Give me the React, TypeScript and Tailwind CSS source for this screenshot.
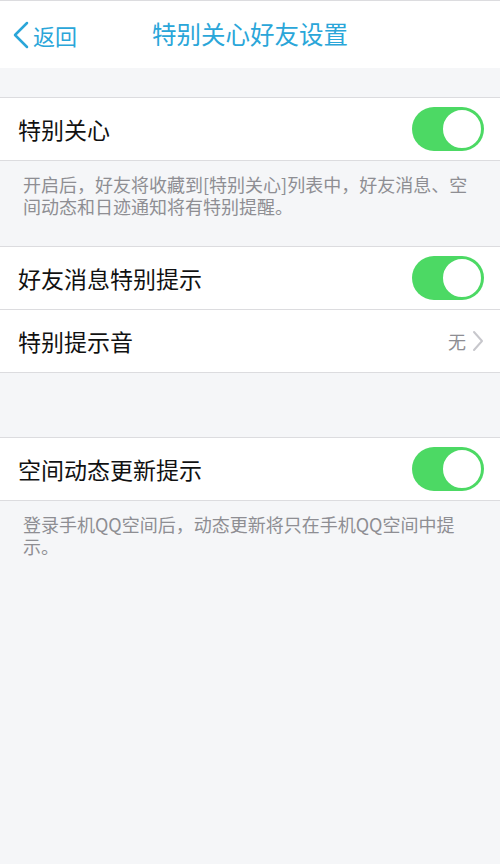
import React from 'react';

const font = { fontFamily: '"Noto Sans CJK SC", "Noto Sans", sans-serif' };

function Toggle() {
  return (
    <div className="relative h-[44px] w-[72px] rounded-full bg-[#4cd964]">
      <div className="absolute right-[1px] top-[1px] h-[42px] w-[42px] rounded-full border-[2px] border-[#4cd964] bg-white" />
    </div>
  );
}

function Row({ label, right, last }: { label: string; right: React.ReactNode; last?: boolean }) {
  return (
    <div className={`flex items-center justify-between bg-white pl-[18px] pr-[16px] ${last ? 'h-[62px]' : 'h-[63px] border-b border-[#dcdcdf]'}`}>
      <span className="text-[23px] leading-none text-[#111]">{label}</span>
      {right}
    </div>
  );
}

export default function App() {
  return (
    <div className="min-h-[864px] w-full bg-[#f5f6f8]" style={font}>
      {/* Nav bar */}
      <div className="relative flex h-[68px] items-center justify-center border-t border-[#dcdcdf] bg-white">
        <div className="absolute left-[10px] top-[19px] flex items-center text-[#2aa6d9]">
          <svg width="22" height="30" viewBox="0 0 22 30" fill="none">
            <path d="M17 3 L5 15 L17 27" stroke="#2aa6d9" strokeWidth="2.5" strokeLinecap="round" strokeLinejoin="round" />
          </svg>
          <span className="ml-[1px] text-[22px] leading-none">返回</span>
        </div>
        <span className="text-[24.5px] leading-none text-[#2aa6d9]">特别关心好友设置</span>
      </div>

      <div className="h-[29px]" />

      {/* Group 1 */}
      <div className="border-y border-[#dcdcdf]">
        <Row label="特别关心" right={<Toggle />} last />
      </div>
      <div className="h-[85px] px-[23px] pt-[12px] text-[18px] leading-[22px] text-[#8e8e93]">
        开启后，好友将收藏到[特别关心]列表中，好友消息、空间动态和日迹通知将有特别提醒。
      </div>

      {/* Group 2 */}
      <div className="border-y border-[#dcdcdf]">
        <Row label="好友消息特别提示" right={<Toggle />} />
        <Row
          label="特别提示音"
          right={
            <div className="flex items-center gap-[6px] text-[18px] text-[#8e8e93]">
              <span>无</span>
              <svg width="12" height="22" viewBox="0 0 12 22" fill="none">
                <path d="M2 2 L10 11 L2 20" stroke="#c7c7cc" strokeWidth="2" strokeLinecap="round" strokeLinejoin="round" />
              </svg>
            </div>
          }
          last
        />
      </div>

      <div className="h-[64px]" />

      {/* Group 3 */}
      <div className="border-y border-[#dcdcdf]">
        <Row label="空间动态更新提示" right={<Toggle />} last />
      </div>
      <div className="px-[23px] pt-[12px] pr-[30px] text-[18px] leading-[22px] text-[#8e8e93]">
        登录手机QQ空间后，动态更新将只在手机QQ空间中提示。
      </div>
    </div>
  );
}
